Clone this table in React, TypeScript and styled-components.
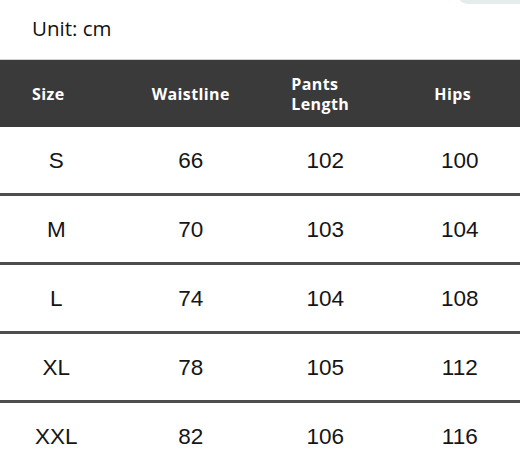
import React from "react";
import styled, { createGlobalStyle } from "styled-components";

const Global = createGlobalStyle`
  html, body { margin: 0; padding: 0; background: #fff; overflow: hidden; }
  #root { width: 520px; height: 469px; overflow: hidden; position: relative; }
`;

const Page = styled.div`
  width: 520px;
  height: 469px;
  position: relative;
  overflow: hidden;
  background: #fff;
`;

const Corner = styled.div`
  position: absolute;
  top: -15px;
  right: -30px;
  width: 92px;
  height: 19px;
  border-radius: 10px;
  background: #e6ecec;
`;

const TopBar = styled.div`
  height: 60px;
  border-bottom: 1px solid #d2d2d2;
  display: flex;
  align-items: center;
  padding-left: 32px;
  box-sizing: border-box;
  font-family: "Open Sans", "Noto Sans", sans-serif;
  font-size: 20.5px;
  color: #111;
  padding-bottom: 3px;
`;

const Table = styled.div`
  width: 538px;
  margin-left: -11px;
`;

const HeaderRow = styled.div`
  display: grid;
  grid-template-columns: repeat(4, 1fr);
  height: 67px;
  background: #3a3a3a;
  align-items: center;
  font-family: "Open Sans", "Noto Sans", sans-serif;
  font-weight: 700;
  font-size: 16px;
  line-height: 20px;
  color: #fff;
  letter-spacing: 0.4px;
`;

const HeadCell = styled.div<{ $shift: number }>`
  display: flex;
  justify-content: center;
  text-align: left;
  transform: translateX(${(p) => p.$shift}px);
`;

const HeadText = styled.span`
  display: block;
`;

const Row = styled.div<{ $last?: boolean }>`
  display: grid;
  grid-template-columns: repeat(4, 1fr);
  height: 69px;
  box-sizing: border-box;
  align-items: center;
  border-bottom: ${(p) => (p.$last ? "1px solid #e4e4e4" : "3px solid #4d4d4d")};
  padding-top: ${(p) => (p.$last ? "0" : "1px")};
  font-family: "Liberation Sans", Arial, sans-serif;
  font-size: 22.5px;
  color: #151515;
`;

const Cell = styled.div`
  text-align: center;
`;

const headers: { lines: string[]; shift: number }[] = [
  { lines: ["Size"], shift: -8 },
  { lines: ["Waistline"], shift: 0 },
  { lines: ["Pants", "Length"], shift: -5 },
  { lines: ["Hips"], shift: -7 },
];

const rows = [
  ["S", "66", "102", "100"],
  ["M", "70", "103", "104"],
  ["L", "74", "104", "108"],
  ["XL", "78", "105", "112"],
  ["XXL", "82", "106", "116"],
];

export default function App() {
  return (
    <Page>
      <Global />
      <Corner />
      <TopBar>Unit: cm</TopBar>
      <Table>
        <HeaderRow>
          {headers.map((h, i) => (
            <HeadCell key={i} $shift={h.shift}>
              <div>
                {h.lines.map((l) => (
                  <HeadText key={l}>{l}</HeadText>
                ))}
              </div>
            </HeadCell>
          ))}
        </HeaderRow>
        {rows.map((r, i) => (
          <Row key={i} $last={i === rows.length - 1}>
            {r.map((c, j) => (
              <Cell key={j}>{c}</Cell>
            ))}
          </Row>
        ))}
      </Table>
    </Page>
  );
}
